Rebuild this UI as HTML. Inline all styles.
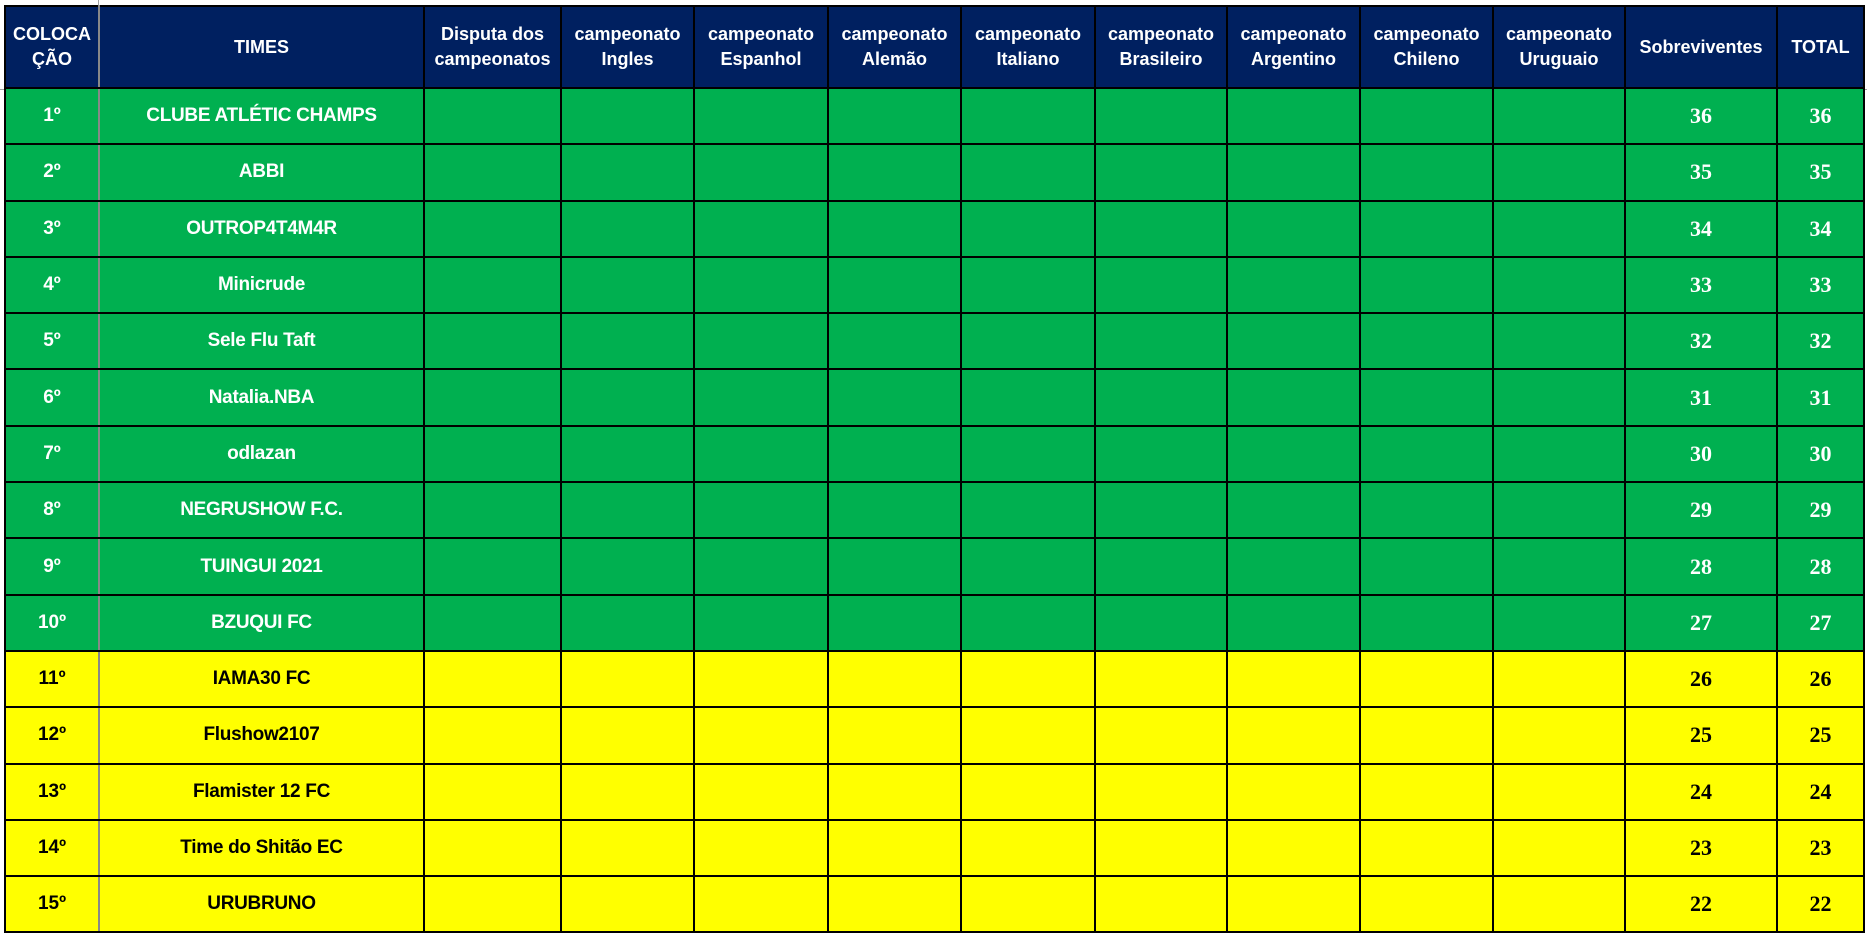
<!DOCTYPE html>
<html><head><meta charset="utf-8"><style>
html,body{margin:0;width:1867px;height:933px;overflow:hidden;background:#fff}
body{position:relative}
.gl{position:absolute;background:#a0a0a0}
table{position:absolute;left:4px;top:5px;border-collapse:collapse;table-layout:fixed}
td{border:2px solid #000;text-align:center;vertical-align:middle;padding:0;overflow:hidden;white-space:nowrap}
tr.h td{background:#002060;color:#fff;font:bold 18px/25px "Liberation Sans",sans-serif;height:80px}
tr.g td{background:#00B050;color:#fff}
tr.y td{background:#FFFF00;color:#000}
tr.g td,tr.y td{height:54.3px}
tr.y.last td{height:6px;font-size:1px;line-height:1px}
td.p{font:bold 19px "Liberation Sans",sans-serif}
td.n{font:bold 19px "Liberation Sans",sans-serif;letter-spacing:-0.3px}
td.s{font:bold 22px "Liberation Serif",serif}
td.c1{border-right-color:#888}
</style></head><body>
<div class="gl" style="left:98px;top:0;width:1px;height:10px"></div>
<div class="gl" style="left:0;top:89px;width:6px;height:1px"></div>
<div class="gl" style="left:1862px;top:89px;width:5px;height:1px"></div>
<table>
<colgroup><col style="width:94px"><col style="width:325px"><col style="width:137px"><col style="width:133px"><col style="width:134px"><col style="width:133px"><col style="width:134px"><col style="width:132px"><col style="width:133px"><col style="width:133px"><col style="width:132px"><col style="width:152px"><col style="width:87px"></colgroup>
<tr class="h"><td class="c1">COLOCA<br>ÇÃO</td><td>TIMES</td><td>Disputa dos<br>campeonatos</td><td>campeonato<br>Ingles</td><td>campeonato<br>Espanhol</td><td>campeonato<br>Alemão</td><td>campeonato<br>Italiano</td><td>campeonato<br>Brasileiro</td><td>campeonato<br>Argentino</td><td>campeonato<br>Chileno</td><td>campeonato<br>Uruguaio</td><td>Sobreviventes</td><td>TOTAL</td></tr>
<tr class="g"><td class="p c1">1º</td><td class="n">CLUBE ATLÉTIC CHAMPS</td><td></td><td></td><td></td><td></td><td></td><td></td><td></td><td></td><td></td><td class="s">36</td><td class="s">36</td></tr>
<tr class="g"><td class="p c1">2º</td><td class="n">ABBI</td><td></td><td></td><td></td><td></td><td></td><td></td><td></td><td></td><td></td><td class="s">35</td><td class="s">35</td></tr>
<tr class="g"><td class="p c1">3º</td><td class="n">OUTROP4T4M4R</td><td></td><td></td><td></td><td></td><td></td><td></td><td></td><td></td><td></td><td class="s">34</td><td class="s">34</td></tr>
<tr class="g"><td class="p c1">4º</td><td class="n">Minicrude</td><td></td><td></td><td></td><td></td><td></td><td></td><td></td><td></td><td></td><td class="s">33</td><td class="s">33</td></tr>
<tr class="g"><td class="p c1">5º</td><td class="n">Sele Flu Taft</td><td></td><td></td><td></td><td></td><td></td><td></td><td></td><td></td><td></td><td class="s">32</td><td class="s">32</td></tr>
<tr class="g"><td class="p c1">6º</td><td class="n">Natalia.NBA</td><td></td><td></td><td></td><td></td><td></td><td></td><td></td><td></td><td></td><td class="s">31</td><td class="s">31</td></tr>
<tr class="g"><td class="p c1">7º</td><td class="n">odlazan</td><td></td><td></td><td></td><td></td><td></td><td></td><td></td><td></td><td></td><td class="s">30</td><td class="s">30</td></tr>
<tr class="g"><td class="p c1">8º</td><td class="n">NEGRUSHOW F.C.</td><td></td><td></td><td></td><td></td><td></td><td></td><td></td><td></td><td></td><td class="s">29</td><td class="s">29</td></tr>
<tr class="g"><td class="p c1">9º</td><td class="n">TUINGUI 2021</td><td></td><td></td><td></td><td></td><td></td><td></td><td></td><td></td><td></td><td class="s">28</td><td class="s">28</td></tr>
<tr class="g"><td class="p c1">10º</td><td class="n">BZUQUI FC</td><td></td><td></td><td></td><td></td><td></td><td></td><td></td><td></td><td></td><td class="s">27</td><td class="s">27</td></tr>
<tr class="y"><td class="p c1">11º</td><td class="n">IAMA30 FC</td><td></td><td></td><td></td><td></td><td></td><td></td><td></td><td></td><td></td><td class="s">26</td><td class="s">26</td></tr>
<tr class="y"><td class="p c1">12º</td><td class="n">Flushow2107</td><td></td><td></td><td></td><td></td><td></td><td></td><td></td><td></td><td></td><td class="s">25</td><td class="s">25</td></tr>
<tr class="y"><td class="p c1">13º</td><td class="n">Flamister 12 FC</td><td></td><td></td><td></td><td></td><td></td><td></td><td></td><td></td><td></td><td class="s">24</td><td class="s">24</td></tr>
<tr class="y"><td class="p c1">14º</td><td class="n">Time do Shitão EC</td><td></td><td></td><td></td><td></td><td></td><td></td><td></td><td></td><td></td><td class="s">23</td><td class="s">23</td></tr>
<tr class="y"><td class="p c1">15º</td><td class="n">URUBRUNO</td><td></td><td></td><td></td><td></td><td></td><td></td><td></td><td></td><td></td><td class="s">22</td><td class="s">22</td></tr>
<tr class="y last"><td class="c1"></td><td></td><td></td><td></td><td></td><td></td><td></td><td></td><td></td><td></td><td></td><td></td><td></td></tr>
</table>
</body></html>
